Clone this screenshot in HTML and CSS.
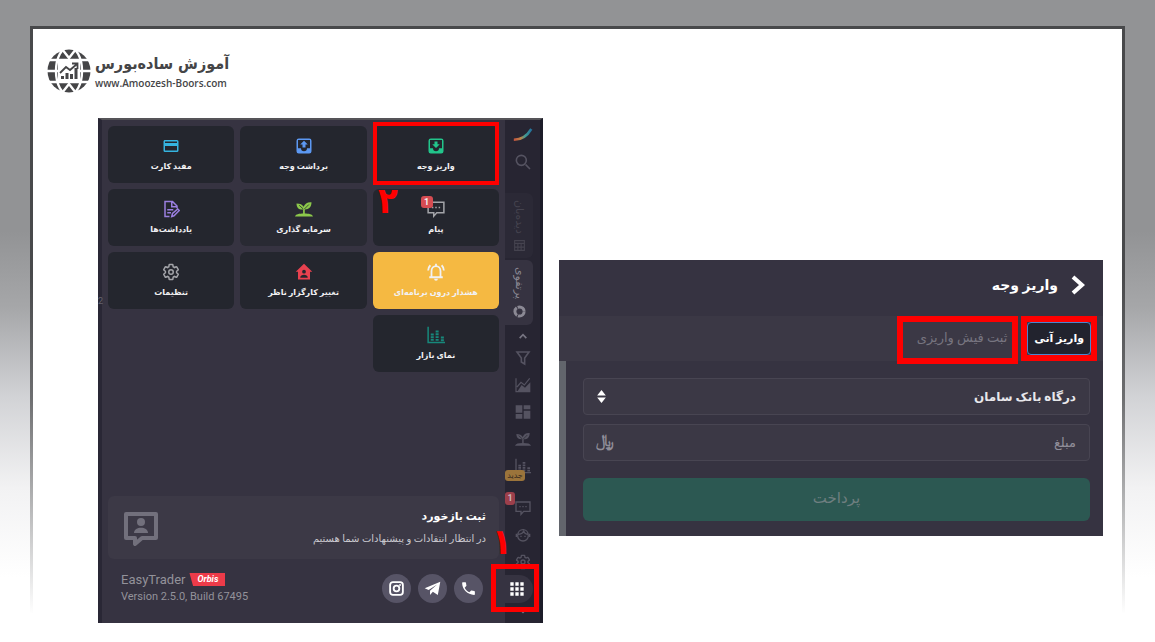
FILE: index.html
```html
<!DOCTYPE html>
<html lang="fa" dir="rtl">
<head>
    <meta charset="UTF-8">
    <title>واریز وجه</title>
    <link rel="stylesheet" href="styles.css">
</head>
<body>
    <svg class="sprite" aria-hidden="true">
        <symbol id="gear" viewBox="0 0 24 24"><path fill="none" stroke="currentColor" stroke-width="2" d="M19.43 12.98c.04-.32.07-.64.07-.98 0-.34-.03-.66-.07-.98l2.11-1.65c.19-.15.24-.42.12-.64l-2-3.46c-.09-.16-.26-.25-.44-.25-.06 0-.12.01-.17.03l-2.49 1c-.52-.4-1.08-.73-1.69-.98l-.38-2.65C14.46 2.18 14.25 2 14 2h-4c-.25 0-.46.18-.49.42l-.38 2.65c-.61.25-1.17.59-1.69.98l-2.49-1c-.06-.02-.12-.03-.18-.03-.17 0-.34.09-.43.25l-2 3.46c-.13.22-.07.49.12.64l2.11 1.65c-.04.32-.07.65-.07.98 0 .33.03.66.07.98l-2.11 1.65c-.19.15-.24.42-.12.64l2 3.46c.09.16.26.25.44.25.06 0 .12-.01.17-.03l2.49-1c.52.4 1.08.73 1.69.98l.38 2.65c.03.24.24.42.49.42h4c.25 0 .46-.18.49-.42l.38-2.65c.61-.25 1.17-.59 1.69-.98l2.49 1c.06.02.12.03.18.03.17 0 .34-.09.43-.25l2-3.46c.12-.22.07-.49-.12-.64l-2.11-1.65z"/><circle cx="12" cy="12" r="3" fill="none" stroke="currentColor" stroke-width="2"/></symbol>
        <symbol id="message" viewBox="0 0 24 24"><path fill="none" stroke="currentColor" stroke-width="2" d="M1.500 3h21v14H13l-4 4.500V17H1.500z"/><path fill="currentColor" d="M6.500 9h2v2h-2zM11 9h2v2h-2zM15.500 9h2v2h-2z"/></symbol>
        <symbol id="sprout" viewBox="0 0 24 24"><path fill="currentColor" d="M0 22c1-3 5-4 12-4s11 1 12 4zM10.800 18v-5.500C5 13 2 10 2 4.500c5 0 8 1.500 9.500 4.500C13 5 16.500 2.500 22 3c0 6-3 9.500-9 9.500V18z"/><path d="M5.500 7l5.500 5M18.500 6L12.500 12" stroke="#24262e" fill="none"/></symbol>
        <symbol id="bars" viewBox="0 0 24 24"><path fill="none" stroke="currentColor" stroke-width="2" d="M1.500 1v21H24"/><path fill="currentColor" d="M5 10h4v2.600H5zM5 13.600h4v2.600H5zM5 17.200h4v2.600H5zM11.500 6h4v2.600h-4zM11.500 9.800h4v2.600h-4zM11.500 13.500h4v2.600h-4zM11.500 17.200h4v2.600h-4zM18.500 14h4v2.600h-4zM18.500 17.600h4v2.600h-4z"/></symbol>
        <symbol id="chevron" viewBox="0 0 24 24"><path fill="none" stroke="currentColor" stroke-width="4" d="M4 17l8-8 8 8"/></symbol>
    </svg>

    <div class="frame">
        <header class="brand">
            <svg class="brand-logo" viewBox="0 0 44 44">
                <circle cx="22" cy="22" r="21.500" fill="#454547"/>
                <g fill="none" stroke="#fff" stroke-width="2.400">
                    <path d="M0 22h44M3 11h38M3 33h38"/>
                    <ellipse cx="22" cy="22" rx="13" ry="24"/>
                    <path d="M15 0l7 9 7-9M15 44l7-9 7 9"/>
                </g>
                <path fill="#fff" d="M11 11h22v22H11z"/>
                <path fill="#454547" d="M14 27h3v3h-3zM18.500 24h3v6h-3zM23 25h3v5h-3zM27.500 19h3v11h-3z"/>
                <path d="M13 24l6-6 4 3 7-6M25 14.500h5.500V20" fill="none" stroke="#454547" stroke-width="1.800"/>
            </svg>
            <div class="brand-text">
                <span class="brand-name">آموزش ساده‌بورس</span>
                <span class="brand-url">www.Amoozesh-Boors.com</span>
            </div>
        </header>

        <main class="panels">
            <section class="app">
                <nav class="rail">
                    <div class="rail-top">
                        <svg class="rail-logo" viewBox="0 0 24 24">
                            <defs><linearGradient id="swoosh"><stop offset="0" stop-color="#c6533e"/><stop offset=".4" stop-color="#b98349"/><stop offset=".65" stop-color="#3f9b95"/><stop offset="1" stop-color="#23719c"/></linearGradient></defs>
                            <path d="M1 19c8 0 15-3 21-13" stroke="url(#swoosh)" stroke-width="3" fill="none"/>
                        </svg>
                        <button class="icon-btn" aria-label="جستجو"><svg viewBox="0 0 24 24"><path fill="none" stroke="currentColor" stroke-width="2.400" d="M16 16l6.500 6.500M17 9.500a7.500 7.500 0 1 1-15 0 7.500 7.500 0 0 1 15 0z"/></svg></button>
                    </div>
                    <button class="rail-tab dim">
                        <span>
                            <svg viewBox="0 0 24 24"><path fill="none" stroke="currentColor" stroke-width="2" d="M3 3h18v18H3zM3 8h18M9 8v13M15 8v13M3 15h18"/></svg>
                            دیده‌بان
                        </span>
                    </button>
                    <button class="rail-tab">
                        <span>
                            <svg viewBox="0 0 24 24"><circle cx="12" cy="12" r="8.500" fill="none" stroke="currentColor" stroke-width="5.500" stroke-dasharray="16 1.800"/></svg>
                            پرتفوی
                        </span>
                    </button>
                    <div class="rail-list">
                        <button class="icon-btn small" aria-label="بالا"><svg><use href="#chevron"/></svg></button>
                        <button class="icon-btn" aria-label="فیلتر"><svg viewBox="0 0 24 24"><path fill="none" stroke="currentColor" stroke-width="2.400" d="M3 3h18l-6.500 9v9l-5-3v-6z"/></svg></button>
                        <button class="icon-btn" aria-label="نمودار"><svg viewBox="0 0 24 24"><path fill="none" stroke="currentColor" stroke-width="1.800" d="M1.500 2v20H23M3 15l6-7 5 4 8-10"/><path fill="currentColor" d="M4 21l6-9 5 4 8-8v13z"/></svg></button>
                        <button class="icon-btn" aria-label="داشبورد"><svg viewBox="0 0 24 24"><path fill="currentColor" d="M1 2h10v11H1zM13 2h10v6H13zM1 15h10v7H1zM13 10h10v12H13z"/></svg></button>
                        <button class="icon-btn" aria-label="سرمایه گذاری"><svg><use href="#sprout"/></svg></button>
                        <button class="icon-btn" aria-label="نمای بازار"><svg><use href="#bars"/></svg><span class="tag new">جدید</span></button>
                        <button class="icon-btn gap" aria-label="پیام"><svg><use href="#message"/></svg><span class="tag count">1</span></button>
                        <button class="icon-btn" aria-label="پشتیبانی"><svg viewBox="0 0 24 24"><path fill="none" stroke="currentColor" stroke-width="2" d="M4 13a8 8 0 1 0 16 0c0-12-16-12-16 0zM4 11c6 0 8-2 9-5 1 3 4 5 7 5M2 10v5M22 10v5"/><path fill="currentColor" d="M8 13h2v2H8zM14 13h2v2h-2z"/></svg></button>
                        <button class="icon-btn" aria-label="تنظیمات"><svg><use href="#gear"/></svg></button>
                        <button class="apps-btn marked" aria-label="منو"><svg viewBox="0 0 24 24"><path fill="currentColor" d="M2 2h5v5H2zM9.500 2h5v5h-5zM17 2h5v5h-5zM2 9.500h5v5H2zM9.500 9.500h5v5h-5zM17 9.500h5v5h-5zM2 17h5v5H2zM9.500 17h5v5h-5zM17 17h5v5h-5z"/></svg></button>
                        <button class="icon-btn small down" aria-label="پایین"><svg><use href="#chevron"/></svg></button>
                    </div>
                </nav>

                <div class="menu">
                    <div class="tiles">
                        <button class="tile green marked">
                            <svg viewBox="0 0 24 24"><path fill="currentColor" d="M19 2H5a3 3 0 0 0-3 3v14a3 3 0 0 0 3 3h14a3 3 0 0 0 3-3V5a3 3 0 0 0-3-3zm1 13h-4a4 4 0 0 1-8 0H4V4h16zM17 9.500h-3V6h-4v3.500H7l5 5z"/></svg>
                            واریز وجه
                        </button>
                        <button class="tile blue">
                            <svg viewBox="0 0 24 24"><path fill="currentColor" d="M19 2H5a3 3 0 0 0-3 3v14a3 3 0 0 0 3 3h14a3 3 0 0 0 3-3V5a3 3 0 0 0-3-3zm1 13h-4a4 4 0 0 1-8 0H4V4h16zM7 10h3v4h4v-4h3l-5-5z"/></svg>
                            برداشت وجه
                        </button>
                        <button class="tile cyan">
                            <svg viewBox="0 0 24 24"><path fill="currentColor" d="M20 8H4V6h16m0 12H4v-6h16m0-8H4c-1.110 0-2 .890-2 2v12a2 2 0 0 0 2 2h16a2 2 0 0 0 2-2V6a2 2 0 0 0-2-2z"/></svg>
                            مفید کارت
                        </button>
                        <button class="tile gray">
                            <svg><use href="#message"/></svg>
                            پیام
                            <span class="tile-count">1</span>
                        </button>
                        <button class="tile lime soft">
                            <svg><use href="#sprout"/></svg>
                            سرمایه گذاری
                        </button>
                        <button class="tile purple">
                            <svg viewBox="0 0 24 24"><path fill="none" stroke="currentColor" stroke-width="2" d="M10 22H4V2h10l6 6v3M13 2v7h7M7 13h8M7 17h5M13 22l1-4 7-6 2 2-7 7z"/></svg>
                            یادداشت‌ها
                        </button>
                        <button class="tile alert">
                            <svg viewBox="0 0 24 24"><path fill="none" stroke="currentColor" stroke-width="2.400" d="M3 19h18M6 19v-8c0-9 12-9 12 0v8M12 1v4M1.500 10c0-3 1-5 3-7M22.500 10c0-3-1-5-3-7"/><path fill="currentColor" d="M9.500 21h5a2.500 2.500 0 0 1-5 0z"/></svg>
                            هشدار درون برنامه‌ای
                        </button>
                        <button class="tile red">
                            <svg viewBox="0 0 24 24"><path fill="currentColor" fill-rule="evenodd" d="M12 1L1 11.500h3V22h16V11.500h3zM12 9a2.500 2.500 0 1 1 0 5 2.500 2.500 0 0 1 0-5zM7 19.500c0-5 10-5 10 0z"/></svg>
                            تغییر کارگزار ناظر
                        </button>
                        <button class="tile gray">
                            <svg><use href="#gear"/></svg>
                            تنظیمات
                        </button>
                        <button class="tile teal">
                            <svg><use href="#bars"/></svg>
                            نمای بازار
                        </button>
                    </div>

                    <div class="feedback">
                        <div>
                            <h2>ثبت بازخورد</h2>
                            <p>در انتظار انتقادات و پیشنهادات شما هستیم</p>
                        </div>
                        <svg viewBox="0 0 36 36"><path fill="none" stroke="currentColor" stroke-width="4" stroke-linejoin="round" d="M3 4h30v24H19l-7 6v-6H3z"/><circle cx="18" cy="12" r="4" fill="currentColor"/><path fill="currentColor" d="M11 23c0-7 14-7 14 0z"/></svg>
                    </div>

                    <footer class="about">
                        <div class="social">
                            <a href="#" aria-label="تلفن"><svg viewBox="0 0 24 24"><path fill="currentColor" d="M6.620 10.790c1.440 2.830 3.760 5.140 6.590 6.590l2.200-2.200c.270-.270.670-.360 1.020-.240 1.120.370 2.330.570 3.570.570.550 0 1 .450 1 1V20c0 .550-.450 1-1 1-9.390 0-17-7.610-17-17 0-.550.450-1 1-1h3.500c.550 0 1 .450 1 1 0 1.250.200 2.450.570 3.570.110.350.030.740-.250 1.020z"/></svg></a>
                            <a href="#" aria-label="تلگرام"><svg viewBox="0 0 24 24"><path fill="currentColor" d="M1 11.500L23 2.500 19.500 21l-7-4.500-4 4.500V15l10-8.500L6.500 14z"/></svg></a>
                            <a href="#" aria-label="اینستاگرام"><svg viewBox="0 0 24 24"><g fill="none" stroke="currentColor" stroke-width="2.600"><rect x="3" y="3" width="18" height="18" rx="4"/><circle cx="12" cy="12" r="4"/></g><circle cx="17" cy="7" r="1.300" fill="currentColor"/></svg></a>
                        </div>
                        <div class="version" dir="ltr">
                            <div class="product">EasyTrader <span class="edition">Orbis</span></div>
                            <div>Version 2.5.0, Build 67495</div>
                        </div>
                    </footer>
                </div>

                <span class="step one">۱</span>
                <span class="step two">۲</span>
                <span class="edge-num">2</span>
            </section>

            <section class="deposit">
                <div class="deposit-head">
                    <svg viewBox="0 0 16 22"><path fill="none" stroke="currentColor" stroke-width="4" d="M3 3l9 8-9 8"/></svg>
                    <h1>واریز وجه</h1>
                </div>
                <div class="tabs">
                    <div class="tab-box first"><button class="tab active">واریز آنی</button></div>
                    <div class="tab-box"><button class="tab">ثبت فیش واریزی</button></div>
                </div>
                <form class="deposit-form">
                    <div class="field">
                        <select aria-label="درگاه">
                            <option>درگاه بانک سامان</option>
                        </select>
                        <svg viewBox="0 0 10 12"><path fill="currentColor" d="M1 5l4-5 4 5zM1 7h8l-4 5z"/></svg>
                    </div>
                    <div class="field">
                        <input type="text" placeholder="مبلغ" aria-label="مبلغ">
                        <span class="unit">﷼</span>
                    </div>
                    <button class="pay" type="button">پرداخت</button>
                </form>
            </section>
        </main>
    </div>
</body>
</html>
```
FILE: styles.css
```css
* {
    box-sizing: border-box;
}
body {
    margin: 0;
    min-height: 100vh;
    padding: 26px 30px 0;
    font-family: Roboto, "DejaVu Sans", sans-serif;
    background: linear-gradient(#929395 36%, #a6a7a9 48%, #d2d3d6 62%, #f2f2f3 76%, #fff 90%) #fff;
    display: flex;
    overflow: hidden;
}
button, input, select {
    font-family: inherit;
    color: inherit;
    border: none;
    background: none;
    padding: 0;
    margin: 0;
}
h1, h2, p {
    margin: 0;
}
.sprite {
    position: absolute;
    width: 0;
    height: 0;
}
.frame {
    flex: 1;
    border: 3px solid;
    border-bottom: none;
    border-image: linear-gradient(#48494b 40%, #6d6e70 60%, #fff 95%) 3;
    background: #fff;
}

/* site logo */
.brand {
    direction: ltr;
    display: flex;
    align-items: center;
    gap: 4px;
    padding: 20px 14px 0;
    color: #454547;
}
.brand-logo {
    width: 44px;
    height: 44px;
}
.brand-text {
    display: flex;
    flex-direction: column;
    font-family: "DejaVu Sans Condensed", "DejaVu Sans", sans-serif;
}
.brand-name {
    direction: rtl;
    font-size: 16px;
    line-height: 24px;
    font-weight: bold;
    white-space: nowrap;
}
.brand-url {
    font-family: "Open Sans", sans-serif;
    font-size: 10px;
    line-height: 14px;
    font-weight: 600;
}

.panels {
    direction: ltr;
    display: grid;
    grid-template-columns: 445fr 544fr;
    gap: 16px;
    padding: 25px 19px 0 65px;
    align-items: start;
}
.app, .deposit {
    direction: rtl;
    background: #363341;
    color: #fff;
}

/* app menu */
.app {
    position: relative;
    display: flex;
    min-height: 505px;
    border-top: 2px solid #555458;
    border-right: 3px solid #1d1d29;
    border-left: 4px solid #292735;
}
.rail {
    width: 35px;
    background: #272532;
    color: #555361;
    display: flex;
    flex-direction: column;
}
.rail-top {
    display: flex;
    flex-direction: column;
    align-items: center;
    gap: 10px;
    padding-top: 4px;
    height: 73px;
}
.rail-logo {
    width: 20px;
    height: 20px;
}
.icon-btn {
    position: relative;
    height: 27px;
    display: flex;
    align-items: center;
    justify-content: center;
}
.icon-btn svg {
    width: 16px;
    height: 16px;
}
.rail-top .icon-btn {
    height: 16px;
}
.icon-btn.small {
    height: 16px;
    color: #777582;
}
.icon-btn.small svg {
    width: 10px;
    height: 10px;
}
.icon-btn.down svg {
    transform: rotate(180deg);
}
.icon-btn.gap {
    margin-top: 15px;
}
.rail-tab {
    height: 65px;
    margin-right: 7px;
    border-radius: 0 6px 6px 0;
    background: #363341;
    color: #8b8994;
    font-size: 11px;
}
.rail-tab.dim {
    background: #2b2936;
    color: #45434f;
    margin-bottom: 2px;
}
.rail-tab span {
    writing-mode: vertical-rl;
    display: flex;
    align-items: center;
    gap: 5px;
    margin: 0 auto;
    white-space: nowrap;
}
.rail-tab svg {
    width: 13px;
    height: 13px;
}
.rail-list {
    display: flex;
    flex-direction: column;
    padding-top: 3px;
}
.tag {
    position: absolute;
    left: 0;
    border-radius: 3px;
    line-height: 11px;
}
.tag.new {
    top: 18px;
    width: 20px;
    background: #9b743b;
    color: #35291f;
    font-size: 8px;
}
.tag.count {
    top: -2px;
    width: 10px;
    line-height: 13px;
    background: #9c3f4b;
    color: #c9b4ba;
    font-size: 9px;
    font-weight: bold;
}
.apps-btn {
    position: relative;
    height: 28px;
    margin-right: 7px;
    padding-left: 0;
    padding-right: 4px;
    background: #363341;
    border-radius: 0 14px 14px 0;
    color: #fff;
    display: flex;
    align-items: center;
    justify-content: center;
}
.apps-btn svg {
    width: 16px;
    height: 16px;
}
.marked::after {
    content: "";
    position: absolute;
    inset: -4px 0 -2px 0;
    border: 4px solid #fe0000;
}
.apps-btn.marked::after {
    inset: -11px -6px -9px -14px;
    border-width: 5px;
    z-index: 1;
}

.menu {
    flex: 1;
    display: flex;
    flex-direction: column;
    padding: 6px 6px 0;
}
.tiles {
    display: grid;
    grid-template-columns: repeat(3, 1fr);
    gap: 6px;
}
.tile {
    position: relative;
    height: 57px;
    border-radius: 6px;
    background: #24262e;
    display: flex;
    flex-direction: column;
    align-items: center;
    justify-content: center;
    gap: 3px;
    padding-top: 4px;
    font-size: 8px;
    line-height: 18px;
    font-weight: bold;
    color: #f1f1f3;
    white-space: nowrap;
}
.tile svg {
    width: 18px;
    height: 18px;
}
.tile.soft { background: #292a33; }
.tile.alert { background: #f5b942; }
.green svg { color: #22c58b; }
.blue svg { color: #5c98f2; }
.cyan svg { color: #35b4e0; }
.gray svg { color: #a3a4a9; }
.lime svg { color: #8cc84b; }
.purple svg { color: #9a7fe0; }
.red svg { color: #e8414f; }
.teal svg { color: #17887b; }
.tile-count {
    position: absolute;
    top: 7px;
    left: 48px;
    width: 12px;
    border-radius: 3px;
    background: #d64c52;
    font-size: 9px;
    line-height: 12px;
}
.feedback {
    margin-top: auto;
    min-height: 63px;
    padding: 0 13px 0 15px;
    border-radius: 6px;
    background: #3c3946;
    display: flex;
    align-items: center;
    justify-content: space-between;
    color: #c9c8ce;
}
.feedback h2 {
    font-size: 11px;
    line-height: 22px;
    color: #fff;
}
.feedback p {
    font-size: 10px;
    line-height: 22px;
}
.feedback svg {
    width: 36px;
    height: 36px;
    color: #72707c;
}
.about {
    height: 64px;
    padding: 0 16px 6px 13px;
    display: flex;
    align-items: center;
    justify-content: space-between;
    color: #93929a;
}
.social {
    display: flex;
    gap: 7px;
}
.social a {
    width: 29px;
    height: 29px;
    border-radius: 50%;
    background: #575466;
    color: #fff;
    display: flex;
    align-items: center;
    justify-content: center;
}
.social svg {
    width: 17px;
    height: 17px;
}
.version {
    font-size: 11px;
    line-height: 17px;
}
.product {
    font-size: 13px;
    display: flex;
    align-items: center;
    gap: 4px;
}
.edition {
    padding: 0 7px 0 8px;
    background: #ed3b49;
    clip-path: polygon(0 0, 100% 0, 100% 100%, 10% 100%);
    color: #fff;
    font-size: 9px;
    line-height: 13px;
    font-weight: bold;
    font-style: italic;
}
.step {
    position: absolute;
    color: #fe0000;
    font-family: "DejaVu Sans Condensed", "DejaVu Sans", sans-serif;
    font-size: 36px;
    line-height: 36px;
    font-weight: bold;
}
.step.one {
    left: 390px;
    top: 404px;
}
.step.two {
    left: 276px;
    top: 63px;
}
.edge-num {
    position: absolute;
    left: -4px;
    top: 176px;
    font-size: 9px;
    color: #65636f;
}

/* deposit form */
.deposit {
    margin-top: 142px;
}
.deposit-head {
    height: 56px;
    padding: 0 17px 6px;
    display: flex;
    align-items: center;
    gap: 12px;
}
.deposit-head svg {
    width: 16px;
    height: 22px;
}
.deposit-head h1 {
    font-size: 14px;
    font-weight: bold;
}
.tabs {
    display: flex;
    align-items: flex-start;
    gap: 3px;
    height: 45px;
    padding-right: 6px;
    background: #3b3845;
}
.tab-box {
    height: 48px;
    border: 6px solid #fe0000;
    display: flex;
}
.tab-box.first {
    height: 45px;
}
.tab {
    padding: 0 5px 6px 14px;
    font-size: 13px;
    color: #777580;
    white-space: nowrap;
}
.tab.active {
    padding: 0 6px;
    font-size: 11px;
    font-weight: bold;
    color: #fff;
    background: #22232e;
    border: 1px solid #4a86cf;
    border-radius: 4px;
}
.deposit-form {
    padding: 17px 13px 15px 17px;
    border-left: 7px solid #62656c;
    display: flex;
    flex-direction: column;
    gap: 9px;
}
.field {
    position: relative;
    display: flex;
}
.field select, .field input {
    appearance: none;
    flex: 1;
    height: 37px;
    padding: 0 13px;
    border: 1px solid #484552;
    border-radius: 4px;
    background: #3b3845;
    font-size: 13px;
}
.field select {
    font-size: 12px;
    font-weight: bold;
    color: #e8e7ec;
}
.field input::placeholder {
    color: #908e99;
    opacity: 1;
}
.field svg {
    position: absolute;
    left: 13px;
    top: 12px;
    width: 11px;
    height: 13px;
}
.unit {
    position: absolute;
    left: 13px;
    top: 7px;
    font-size: 16px;
    line-height: 20px;
    font-weight: bold;
    color: #908e99;
}
.pay {
    height: 43px;
    margin-top: 8px;
    padding-bottom: 4px;
    border-radius: 6px;
    background: #2c5852;
    color: #6f7f80;
    font-size: 15px;
}
```
